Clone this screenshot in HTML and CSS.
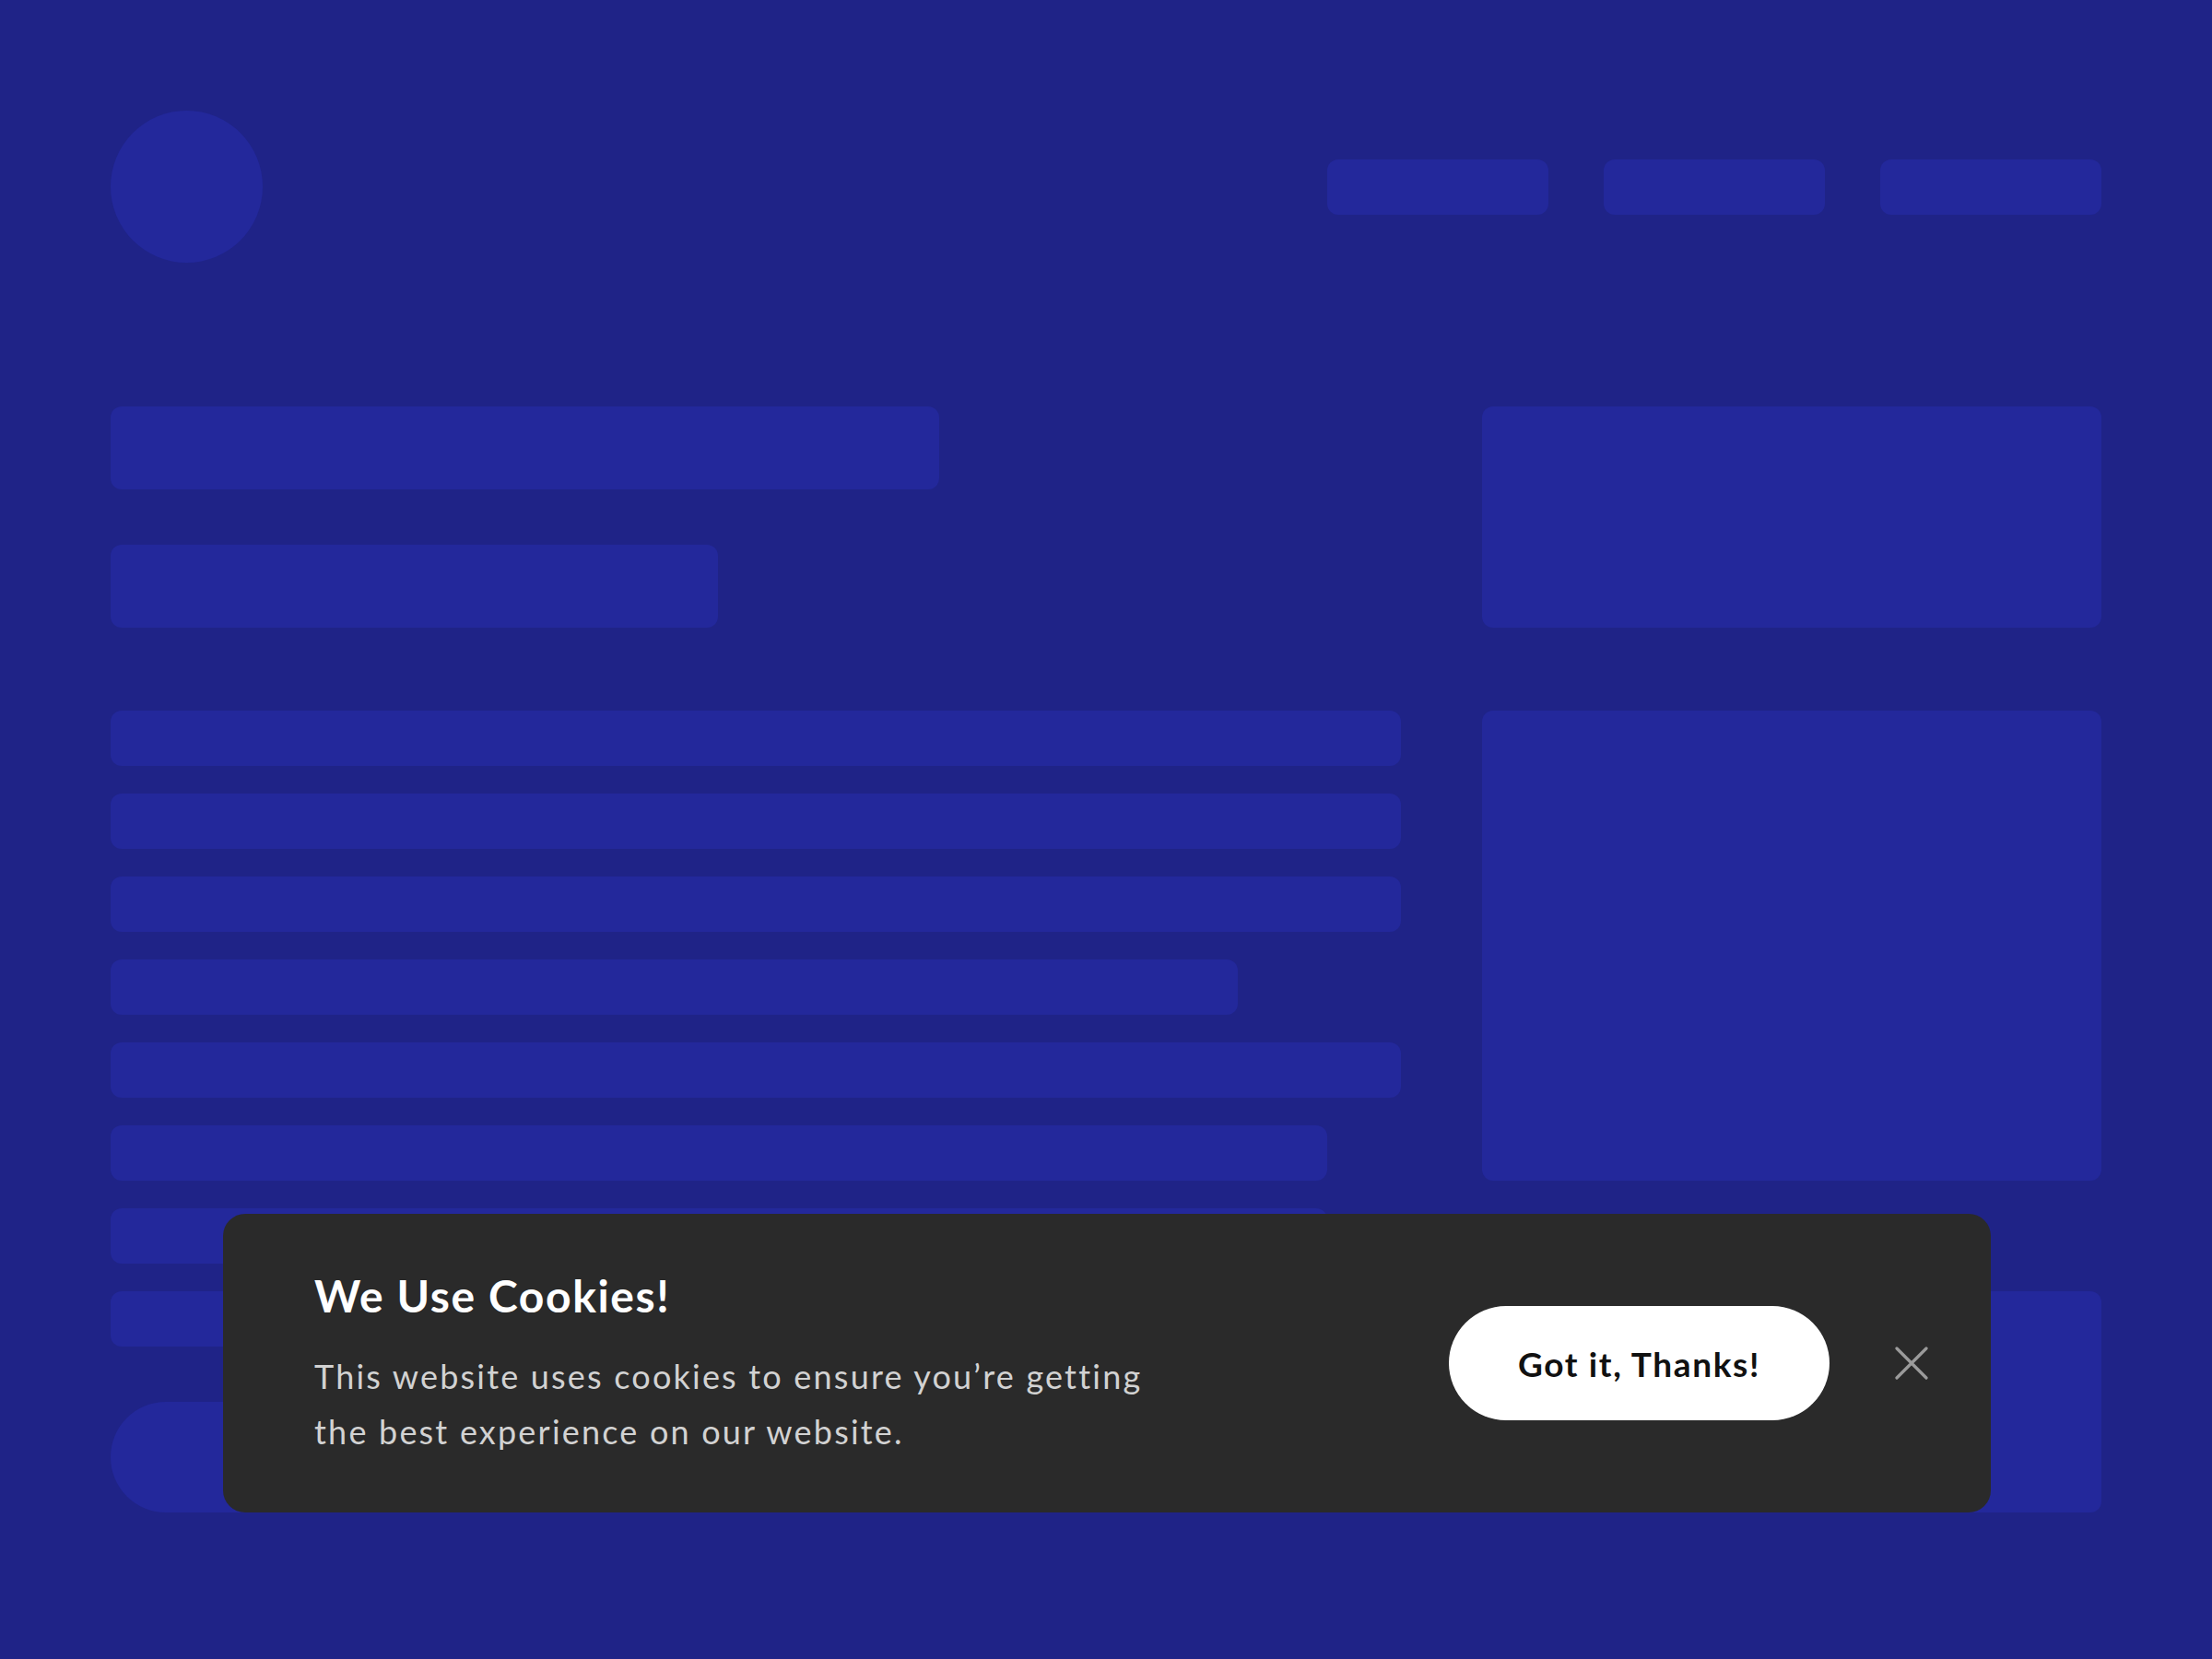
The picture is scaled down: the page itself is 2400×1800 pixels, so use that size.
FILE: index.html
```html
<!DOCTYPE html>
<html lang="en">
<head>
<meta charset="utf-8">
<title>We Use Cookies</title>
<link rel="stylesheet" href="styles.css">
</head>
<body>
<div class="page">
  <header class="header">
    <div class="logo"></div>
    <nav class="nav">
      <div class="nav-item"></div>
      <div class="nav-item"></div>
      <div class="nav-item"></div>
    </nav>
  </header>
  <main class="main">
    <section class="left">
      <div class="block block-title"></div>
      <div class="block block-sub"></div>
      <div class="lines">
        <div class="line"></div>
        <div class="line"></div>
        <div class="line"></div>
        <div class="line line-4"></div>
        <div class="line"></div>
        <div class="line line-6"></div>
        <div class="line line-7"></div>
        <div class="line"></div>
      </div>
      <div class="pill"></div>
    </section>
    <aside class="right">
      <div class="card card-a"></div>
      <div class="card card-b"></div>
      <div class="card card-c"></div>
    </aside>
  </main>
</div>

<div class="cookie">
  <div class="cookie-text">
    <h2 class="cookie-title">We Use Cookies!</h2>
    <p class="cookie-body">This website uses cookies to ensure you’re getting the best experience on our website.</p>
  </div>
  <button class="cookie-btn">Got it, Thanks!</button>
  <button class="cookie-close" aria-label="Close">
    <svg width="36" height="36" viewBox="0 0 36 36"><path d="M2 2 L34 34 M34 2 L2 34" stroke="#9b9b9b" stroke-width="3.2" stroke-linecap="round" fill="none"/></svg>
  </button>
</div>
</body>
</html>
```
FILE: styles.css
```css
html, body {
  margin: 0;
  padding: 0;
}
body {
  background: #1f2387;
  width: 2400px;
  height: 1800px;
  overflow: hidden;
  font-family: Lato, "Noto Sans", sans-serif;
  position: relative;
}
.page {
  padding: 120px 120px 0 120px;
}
.header {
  display: flex;
  justify-content: space-between;
  align-items: center;
  height: 165px;
}
.logo {
  width: 165px;
  height: 165px;
  border-radius: 50%;
  background: #23289b;
}
.nav {
  display: flex;
  gap: 60px;
}
.nav-item {
  width: 240px;
  height: 60px;
  border-radius: 12px;
  background: #23289b;
}
.main {
  margin-top: 156px;
  display: grid;
  grid-template-columns: 1400px 672px;
  column-gap: 88px;
}
.left {
  display: flex;
  flex-direction: column;
  align-items: flex-start;
}
.block {
  height: 90px;
  border-radius: 12px;
  background: #23289b;
}
.block-title { width: 899px; }
.block-sub { width: 659px; margin-top: 60px; }
.lines {
  margin-top: 90px;
  display: flex;
  flex-direction: column;
  gap: 30px;
  width: 100%;
}
.line {
  height: 60px;
  width: 1400px;
  border-radius: 12px;
  background: #23289b;
}
.line-4 { width: 1223px; }
.line-6 { width: 1320px; }
.line-7 { width: 1320px; }
.pill {
  margin-top: 60px;
  width: 380px;
  height: 120px;
  border-radius: 60px;
  background: #23289b;
}
.right {
  display: flex;
  flex-direction: column;
}
.card {
  border-radius: 12px;
  background: #23289b;
}
.card-a { height: 240px; }
.card-b { height: 510px; margin-top: 90px; }
.card-c { height: 240px; margin-top: 120px; }

.cookie {
  position: absolute;
  left: 242px;
  top: 1317px;
  width: 1918px;
  height: 324px;
  box-sizing: border-box;
  background: #2a2a2a;
  border-radius: 24px;
  display: flex;
  align-items: center;
  padding: 0 68px 0 99px;
}
.cookie-text {
  flex: 1;
}
.cookie-title {
  margin: 0;
  font-size: 48px;
  line-height: 60px;
  font-weight: 700;
  letter-spacing: 1.6px;
  color: #ffffff;
}
.cookie-body {
  margin: 27px 0 0 0;
  max-width: 915px;
  font-size: 36px;
  line-height: 60px;
  font-weight: 400;
  letter-spacing: 2.2px;
  color: #d2d2d2;
}
.cookie-btn {
  height: 124px;
  width: 413px;
  border: none;
  border-radius: 62px;
  background: #ffffff;
  color: #111111;
  font-family: Lato, "Noto Sans", sans-serif;
  font-size: 37px;
  font-weight: 700;
  letter-spacing: 1.6px;
  padding: 0;
  margin-left: 40px;
}
.cookie-close {
  margin-left: 71px;
  width: 36px;
  height: 36px;
  padding: 0;
  border: none;
  background: transparent;
  display: flex;
}
```
